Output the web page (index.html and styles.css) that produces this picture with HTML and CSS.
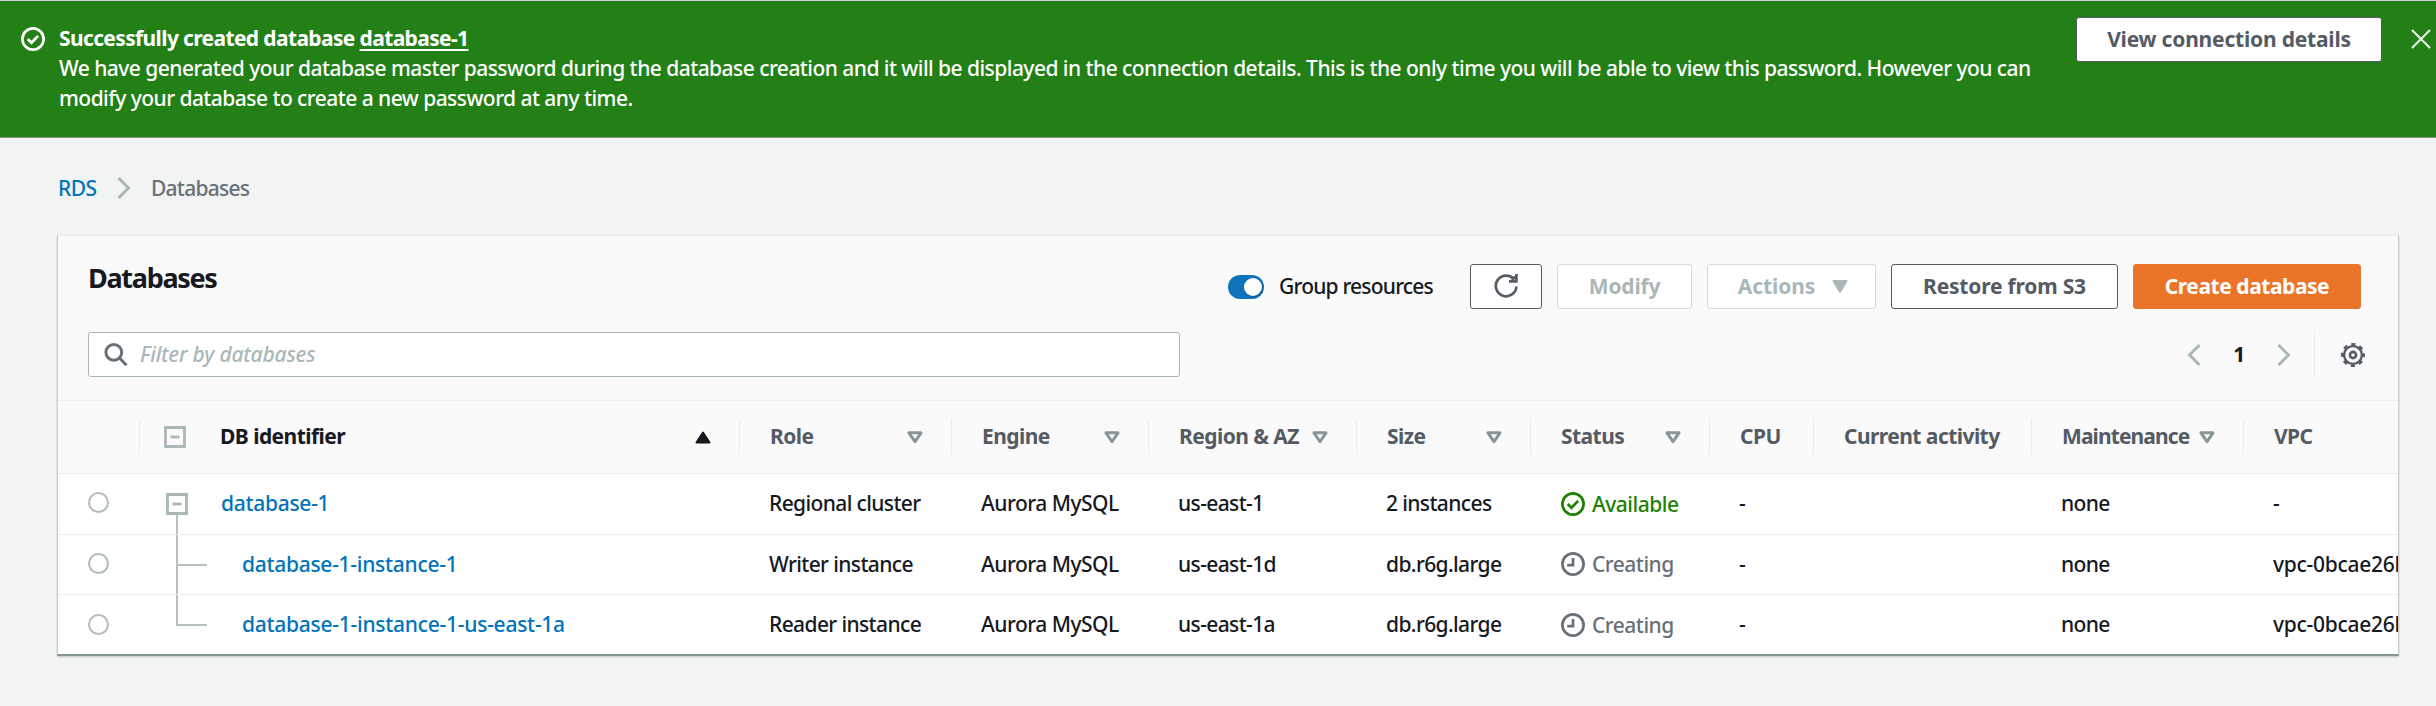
FILE: index.html
```html
<!DOCTYPE html>
<html lang="en">
<head>
<meta charset="utf-8">
<title>RDS Databases</title>
<link rel="stylesheet" href="styles.css">
</head>
<body>
<svg width="0" height="0" class="defs" aria-hidden="true">
  <symbol id="check" viewBox="0 0 24 24"><circle cx="12" cy="12" r="10.6"/><path d="M6.7 12l3.8 3.8 6.6-6.9"/></symbol>
  <symbol id="clock" viewBox="0 0 24 24"><circle cx="12" cy="12" r="10.6"/><path d="M12 6v7.2H6.2"/></symbol>
  <symbol id="sort" viewBox="0 0 16 13"><path d="M2 1.8h12L8 10.6z"/></symbol>
  <symbol id="minus" viewBox="0 0 22 22"><path d="M1.5 1.5h19v19h-19z"/><path d="M6.5 11h9"/></symbol>
  <symbol id="right" viewBox="0 0 14 22"><path d="M1.5 1L11.5 11 1.5 21"/></symbol>
</svg>

<section class="flash">
  <svg class="icon flash-icon"><use href="#check"/></svg>
  <div class="flash-text">
    <div class="flash-title">Successfully created database <a class="flash-link">database-1</a></div>
    <div class="flash-body">We have generated your database master password during the database creation and it will be displayed in the connection details. This is the only time you will be able to view this password. However you can<br>modify your database to create a new password at any time.</div>
  </div>
  <button class="btn btn-flash">View connection details</button>
  <svg class="close" viewBox="0 0 20 20"><path d="M1 1l18 18M19 1L1 19"/></svg>
</section>

<nav class="crumbs">
  <a class="crumb-link">RDS</a>
  <svg class="chevron"><use href="#right"/></svg>
  <span class="crumb-here">Databases</span>
</nav>

<main class="panel">
  <header class="panel-head">
    <div class="bar">
      <h1 class="title">Databases</h1>
      <div class="actions">
        <span class="toggle"><i class="knob"></i></span>
        <span class="toggle-label">Group resources</span>
        <button class="btn btn-refresh"><svg class="icon" viewBox="0 0 24 24"><path d="M22.4 12.5a10.3 10.3 0 1 1-2.4-7.2"/><path d="M22.4 0v7.4H15"/><path d="M17.5 5.5l4-2.5"/></svg></button>
        <button class="btn off btn-modify">Modify</button>
        <button class="btn off btn-actions">Actions<svg class="caret" viewBox="0 0 16 13"><path d="M1.5 1h13L8 11.8z"/></svg></button>
        <button class="btn btn-restore">Restore from S3</button>
        <button class="btn primary">Create database</button>
      </div>
    </div>
    <div class="tools">
      <label class="search">
        <svg class="lens" viewBox="0 0 24 24"><circle cx="9.8" cy="9.3" r="7.9"/><path d="M15.3 14.8l7.2 7.4"/></svg>
        <span class="placeholder">Filter by databases</span>
      </label>
      <div class="pager">
        <svg class="chevron flip"><use href="#right"/></svg>
        <b class="page">1</b>
        <svg class="chevron"><use href="#right"/></svg>
        <span class="gearbox"><svg class="gear" viewBox="0 0 24 24"><circle cx="12" cy="12" r="8.9"/><circle class="teeth" cx="12" cy="12" r="10.8"/><circle class="hub" cx="12" cy="12" r="3.1"/></svg></span>
      </div>
    </div>
  </header>

  <div class="grid head">
    <div class="th"></div>
    <div class="th th-id"><svg class="minus"><use href="#minus"/></svg><span class="id-label">DB identifier</span><svg class="caret up" viewBox="0 0 16 13"><path d="M1.5 11.5h13L8 1.5z"/></svg></div>
    <div class="th"><span>Role</span><svg class="sort"><use href="#sort"/></svg></div>
    <div class="th"><span>Engine</span><svg class="sort"><use href="#sort"/></svg></div>
    <div class="th"><span>Region &amp; AZ</span><svg class="sort"><use href="#sort"/></svg></div>
    <div class="th"><span>Size</span><svg class="sort"><use href="#sort"/></svg></div>
    <div class="th"><span>Status</span><svg class="sort"><use href="#sort"/></svg></div>
    <div class="th"><span>CPU</span></div>
    <div class="th"><span>Current activity</span></div>
    <div class="th maint"><span>Maintenance</span><svg class="sort"><use href="#sort"/></svg></div>
    <div class="th last"><span>VPC</span></div>
  </div>

  <div class="grid row r1">
    <div class="pick"><i class="radio"></i></div>
    <div class="td-id"><svg class="minus"><use href="#minus"/></svg><i class="stem"></i><a class="link">database-1</a></div>
    <div class="td">Regional cluster</div><div class="td engine">Aurora MySQL</div><div class="td">us-east-1</div><div class="td">2 instances</div>
    <div class="td status ok"><svg class="icon"><use href="#check"/></svg>Available</div>
    <div class="td">-</div><div class="td"></div><div class="td">none</div><div class="td">-</div>
  </div>
  <div class="grid row r2">
    <div class="pick"><i class="radio"></i></div>
    <div class="td-id child"><i class="stem full"></i><i class="branch"></i><a class="link">database-1-instance-1</a></div>
    <div class="td">Writer instance</div><div class="td engine">Aurora MySQL</div><div class="td">us-east-1d</div><div class="td">db.r6g.large</div>
    <div class="td status wait"><svg class="icon"><use href="#clock"/></svg>Creating</div>
    <div class="td">-</div><div class="td"></div><div class="td">none</div><div class="td vpc">vpc-0bcae26b</div>
  </div>
  <div class="grid row r3">
    <div class="pick"><i class="radio"></i></div>
    <div class="td-id child"><i class="stem half"></i><i class="branch"></i><a class="link">database-1-instance-1-us-east-1a</a></div>
    <div class="td">Reader instance</div><div class="td engine">Aurora MySQL</div><div class="td">us-east-1a</div><div class="td">db.r6g.large</div>
    <div class="td status wait"><svg class="icon"><use href="#clock"/></svg>Creating</div>
    <div class="td">-</div><div class="td"></div><div class="td">none</div><div class="td vpc">vpc-0bcae26b</div>
  </div>
</main>
</body>
</html>
```
FILE: styles.css
```css
* { box-sizing: border-box; }
body {
  margin: 0;
  height: 706px;
  overflow: hidden;
  background: #f2f3f3;
  color: #16191f;
  font: 460 21px/30px "Noto Sans", "Open Sans", sans-serif;
  letter-spacing: -.62px;
  white-space: nowrap;
}
svg { fill: none; flex: none; display: block; overflow: visible; }
.defs { position: absolute; }
.icon { width: 24px; height: 24px; stroke: currentColor; stroke-width: 2.7; }

.flash {
  display: flex;
  align-items: flex-start;
  height: 138px;
  padding: 15px 5px 0 21px;
  border-top: 1px solid #d5cfd8;
  border-bottom: 1px solid #879596;
  background: #238016;
  color: #fff;
}
.flash-icon { margin: 11px 14px 0 0; }
.flash-text { flex: 1; padding-top: 7px; }
.flash-title { font-weight: 700; letter-spacing: -.63px; }
.flash-link { text-decoration: underline; text-decoration-thickness: 2px; text-underline-offset: 3px; }
.flash-body { font-weight: 500; letter-spacing: -.54px; }
.close { width: 20px; height: 20px; margin: 13px 0 0 29px; stroke: #e6efe4; stroke-width: 2.2; }

.btn {
  display: flex;
  align-items: center;
  justify-content: center;
  height: 45px;
  padding: 0 0 1px;
  border: 1px solid #545b64;
  border-radius: 3px;
  background: #fff;
  color: #545b64;
  font: 700 21px/30px "Noto Sans", sans-serif;
  letter-spacing: -.2px;
}
.btn-flash { width: 306px; margin-top: 1px; padding-bottom: 2px; }
.off { border-color: #d5dbdb; color: #aab7b8; }
.primary { width: 228px; border-color: #ea7428; background: #ea7428; color: #fff; letter-spacing: -.45px; }
.btn-refresh { width: 72px; margin-left: 23px; }
.btn-modify { width: 135px; }
.btn-actions { width: 169px; gap: 17px; padding-left: 3px; letter-spacing: -.1px; }
.btn-restore { width: 227px; }
.caret { width: 16px; height: 13px; fill: currentColor; stroke: currentColor; stroke-width: 2; stroke-linejoin: round; }

.crumbs { display: flex; align-items: center; height: 97px; padding: 3px 0 0 58px; }
.crumb-link { width: 59px; color: #0073bb; }
.crumb-here { margin-left: 20px; color: #687078; letter-spacing: -.75px; }
.chevron { width: 14px; height: 22px; stroke: #aab7b8; stroke-width: 3; }
.flip { transform: scaleX(-1); }

.panel {
  width: 2342px;
  height: 421px;
  margin-left: 57px;
  overflow: hidden;
  border: 1px solid #c3cccd;
  border-top-color: #eaeded;
  border-bottom: 2px solid #879596;
  background: #fff;
  box-shadow: 0 1px 2px rgba(0, 28, 36, .2);
}
.panel-head { height: 165px; padding: 28px 37px 0 31px; border-bottom: 1px solid #eaeded; background: #fafafa; }
.bar { display: flex; justify-content: space-between; height: 68px; }
.title { margin: -3px 0 0 -1px; font: 700 27px/34px "Noto Sans", sans-serif; letter-spacing: -1.3px; }
.actions { display: flex; align-items: center; gap: 15px; height: 45px; }
.toggle { display: flex; justify-content: flex-end; width: 36px; height: 24px; padding: 3px 2px; border-radius: 12px; background: #0f73ba; }
.knob { width: 18px; height: 18px; border-radius: 50%; background: #fff; box-shadow: 1px 1px 1px rgba(0, 0, 0, .3); }
.toggle-label { width: 153px; padding-bottom: 1px; letter-spacing: -.8px; }
.tools { display: flex; justify-content: space-between; height: 45px; margin-right: -4px; }
.search { display: flex; align-items: center; width: 1092px; padding-left: 15px; border: 1px solid #aab7b8; border-radius: 3px; background: #fff; margin-left: -1px; }
.lens { width: 24px; height: 24px; stroke: #687078; stroke-width: 3; }
.placeholder { margin: 0 0 2px 12px; color: #aab7b8; font-style: italic; font-weight: 500; letter-spacing: -.2px; }
.pager { display: flex; align-items: center; }
.page { width: 76px; padding-bottom: 2px; text-align: center; }
.gearbox { display: flex; align-items: center; justify-content: flex-end; width: 51px; height: 45px; margin-left: 23px; border-left: 1px solid #eaeded; }
.gear { width: 24px; height: 24px; stroke: #545b64; stroke-width: 2.4; }
.teeth { stroke-width: 2.4; stroke-dasharray: 4.24 4.24; stroke-dashoffset: 2.12; }
.hub { stroke-width: 2.6; }

.grid { display: grid; grid-template-columns: 82px 600px 212px 197px 208px 174px 179px 104px 218px 212px 155px; align-items: center; }
.head { height: 73px; border-bottom: 1px solid #eaeded; background: #fafafa; }
.th { display: flex; align-items: center; justify-content: space-between; height: 36px; padding: 0 28px 0 30px; border-right: 1px solid #eaeded; color: #545b64; font-weight: 700; letter-spacing: -.55px; }
.th span { padding: 0 0 2px; }
.th-id { padding-left: 24px; color: #16191f; }
.th .id-label { flex: 1; margin-left: 34px; }
.maint { letter-spacing: -.9px; }
.last { border: 0; }
.sort { width: 16px; height: 13px; stroke: #879596; stroke-width: 3; stroke-linejoin: round; }
.minus { width: 22px; height: 22px; stroke: #aab7b8; stroke-width: 2.8; }

.row { height: 60px; border-bottom: 1px solid #eaeded; }
.r1 { height: 61px; }
.r3 { height: 61px; border: 0; }
.pick { padding-left: 30px; }
.radio { display: block; width: 21px; height: 21px; margin-top: -3px; border: 2px solid #b0bcbd; border-radius: 50%; }
.td { padding: 0 0 2px 29px; }
.r3 .td { padding-bottom: 3px; }
.td-id { position: relative; display: flex; align-items: center; height: 100%; padding-left: 26px; }
.td-id .link { margin-left: 33px; padding-bottom: 2px; color: #0073bb; letter-spacing: -.28px; }
.child { padding-left: 38px; }
.td-id.child .link { margin-left: 64px; }
.r3 .td-id .link { padding-bottom: 3px; letter-spacing: -.26px; }
.td.vpc { letter-spacing: -.28px; }
.engine { letter-spacing: -.5px; }
.stem { position: absolute; left: 36px; top: 41px; bottom: 0; width: 2px; background: #b5c0c1; }
.full { top: 0; }
.half { top: 0; bottom: 30px; }
.branch { position: absolute; left: 38px; top: 29px; width: 29px; height: 2px; background: #b5c0c1; }
.td.status { display: flex; align-items: center; gap: 7px; padding-left: 30px; padding-bottom: 1px; letter-spacing: -.5px; }
.ok { color: #1d8102; }
.wait { color: #687078; }
```
